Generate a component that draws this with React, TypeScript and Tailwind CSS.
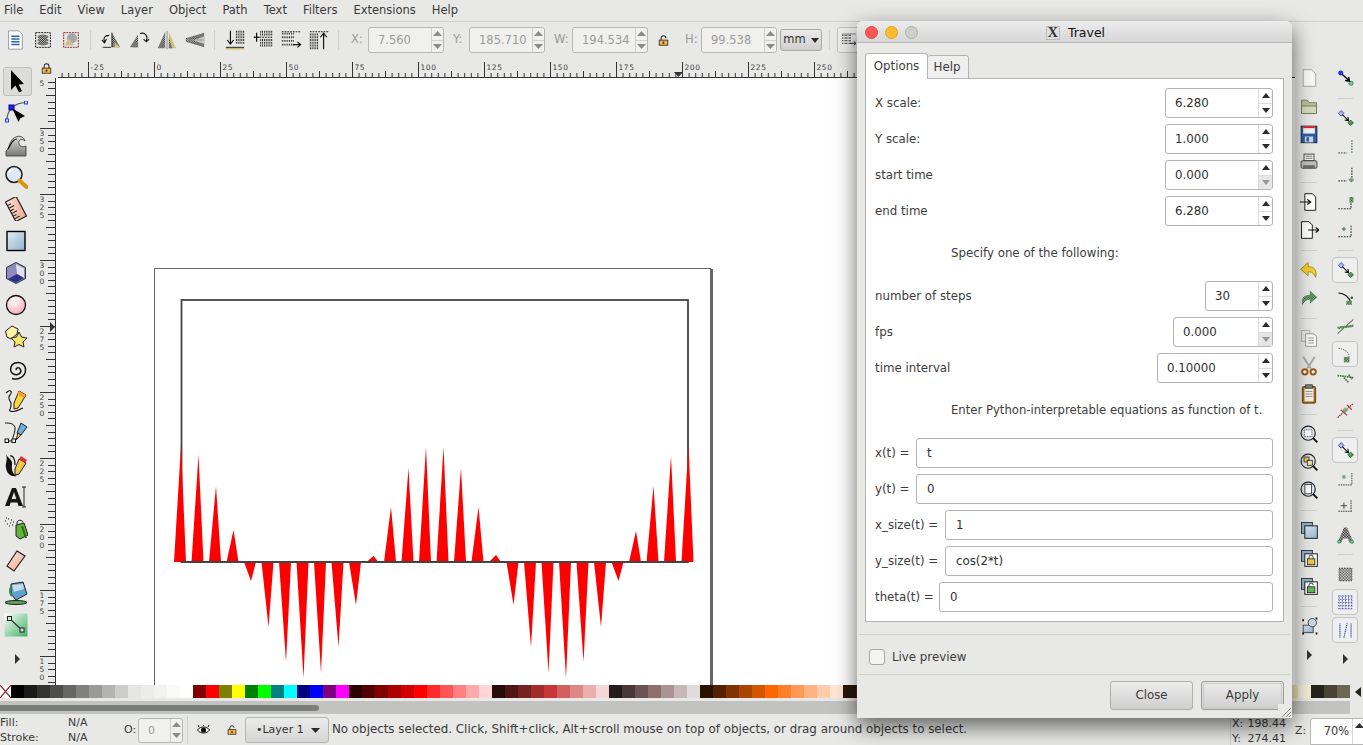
import type { ReactNode } from "react";

const FONT = "font-['DejaVu_Sans',sans-serif]";

const GRAYS = ["#000000", "#1a1a1a", "#333333", "#4d4d4d", "#666666", "#808080", "#999999", "#b3b3b3", "#cccccc", "#e6e6e6", "#ececec", "#f2f2f2", "#f9f9f9", "#ffffff"];
const BASIC = ["#800000", "#ff0000", "#808000", "#ffff00", "#008000", "#00ff00", "#008080", "#00ffff", "#000080", "#0000ff", "#800080", "#ff00ff"];
const REDS = ["#2b0000", "#550000", "#800000", "#aa0000", "#d40000", "#ff0000", "#ff2a2a", "#ff5555", "#ff8080", "#ffaaaa", "#ffd5d5", "#280b0b", "#501616", "#782121", "#a02c2c", "#c83737", "#d35f5f", "#de8787", "#e9afaf", "#f4d7d7", "#241c1c", "#483737", "#6c5353", "#916f6f", "#ac9393", "#c8b7b7", "#e3dbdb"];
const ORANGES = ["#2b1100", "#552200", "#803300", "#aa4400", "#d45500", "#ff6600", "#ff7f2a", "#ff9955", "#ffb380", "#ffccaa", "#ffe6d5", "#28170b", "#502d16", "#784421", "#a05a2c", "#c87137", "#d38d5f", "#deaa87", "#e9c6af", "#f4e3d7", "#241f1c", "#483e37", "#6c5d53", "#917c6f", "#ac9d93", "#c8beb7", "#e3dedb"];
const YELLOWS = ["#2b2200", "#554400", "#806600", "#aa8800", "#d4aa00", "#ffcc00", "#ffd42a", "#ffdd55", "#ffe680", "#ffeeaa", "#fff6d5", "#28220b", "#504416", "#786721", "#a0892c", "#c8ab37", "#d3bc5f", "#decd87", "#e9ddaf", "#f4eed7", "#24221c", "#484537", "#6c6753"];
const PALETTE = [...GRAYS, ...BASIC, ...REDS, ...ORANGES, ...YELLOWS];

const TIPS = [445, 455, 486, 530, 581, 627, 662, 678, 673, 647, 605, 556, 507, 468, 447, 447, 468, 507, 555, 605, 647, 673, 678, 662, 627, 581, 531, 486, 456, 445];

function Ic({ children, size = 24 }: { children: ReactNode; size?: number }) {
  return (
    <svg width={size} height={size} viewBox="0 0 24 24" className="shrink-0">
      {children}
    </svg>
  );
}

function Defs() {
  return (
    <svg width="0" height="0" className="h-0 w-0 shrink-0">
      <defs>
        <pattern id="dz" width="2" height="2" patternUnits="userSpaceOnUse">
          <rect width="2" height="2" fill="#ddd" />
          <rect width="1" height="1" fill="#111" />
          <rect x="1" y="1" width="1" height="1" fill="#111" />
        </pattern>
        <pattern id="dg" width="2" height="2" patternUnits="userSpaceOnUse">
          <rect width="2" height="2" fill="#9fc59f" />
          <rect width="1" height="1" fill="#1d5b1d" />
          <rect x="1" y="1" width="1" height="1" fill="#1d5b1d" />
        </pattern>
        <linearGradient id="gblue" x1="0" y1="0" x2="1" y2="1">
          <stop offset="0" stopColor="#e4edf5" />
          <stop offset="1" stopColor="#8fb2cf" />
        </linearGradient>
        <radialGradient id="gpink" cx="0.4" cy="0.3" r="0.8">
          <stop offset="0" stopColor="#ffffff" />
          <stop offset="1" stopColor="#ff9fb0" />
        </radialGradient>
        <linearGradient id="gsteel" x1="0" y1="0" x2="0" y2="1">
          <stop offset="0" stopColor="#dddddd" />
          <stop offset="1" stopColor="#777777" />
        </linearGradient>
        <linearGradient id="ggreen" x1="0" y1="0" x2="1" y2="1">
          <stop offset="0" stopColor="#ffffff" />
          <stop offset="1" stopColor="#3fae63" />
        </linearGradient>
        <linearGradient id="gsalmon" x1="0" y1="0" x2="1" y2="1">
          <stop offset="0" stopColor="#fde4da" />
          <stop offset="1" stopColor="#f0a890" />
        </linearGradient>
      </defs>
    </svg>
  );
}

const Padlock = ({ open = false, size = 14 }: { open?: boolean; size?: number }) => (
  <svg width={size} height={size} viewBox="0 0 14 14" className="shrink-0">
    <path d={open ? "M4 7V4a3 3 0 0 1 6 0" : "M4 7V4a3 3 0 0 1 6 0v3"} fill="none" stroke="#222" strokeWidth="1.3" />
    <rect x="1.5" y="6.5" width="11" height="6.5" fill="#f3b63a" stroke="#222" />
    <rect x="6" y="8.5" width="2" height="2.5" fill="#222" />
  </svg>
);

// left tool column
const TOOLS: ReactNode[] = [
  <path d="M7 1 L7 21 L11.5 16.5 L15 23.5 L18 22 L14.7 15.5 L20 15 Z" fill="#000" />,
  <>
    <path d="M3 19 C3 10 9 2 22 1.5" fill="none" stroke="#555" strokeWidth="1.2" />
    <rect x="5" y="4" width="5" height="5" fill="#2424f0" stroke="#00009a" />
    <rect x="20.5" y="0" width="3" height="3" fill="#d8d8ff" stroke="#3838e0" />
    <rect x="1.5" y="18" width="3" height="3" fill="#d8d8ff" stroke="#3838e0" />
    <path d="M8 7 L21 15 L16 17.5 L14.5 21 Z" fill="#000" />
  </>,
  <>
    <path d="M2 22 L2 18 C5 17 5 8 10 5 C14 2 20 3 21 8 C17 5 14 7 15 11 C16 14 19 14 22 13 L22 23 L2 23 Z" fill="url(#gsteel)" stroke="#333" strokeWidth="0.8" />
    <path d="M4 16 C7 12 8 6 13 6" fill="none" stroke="#111" strokeWidth="1.2" />
  </>,
  <>
    <circle cx="10" cy="9.5" r="8" fill="#dbe9f4" stroke="#222" strokeWidth="1.6" />
    <path d="M15.5 15.5 L22.5 22" stroke="#e0910f" strokeWidth="4" strokeLinecap="round" />
    <path d="M5 8 C6 5.5 8 4.5 10 4.5" fill="none" stroke="#fff" strokeWidth="1.5" />
  </>,
  <g transform="rotate(-28 12 12)">
    <rect x="6" y="1" width="12" height="22" fill="url(#gsalmon)" stroke="#222" strokeWidth="1.2" />
    <path d="M6 5h4M6 8h6M6 11h4M6 14h6M6 17h4M6 20h6" stroke="#222" />
  </g>,
  <rect x="3" y="2.5" width="18" height="19" fill="url(#gblue)" stroke="#000" strokeWidth="1.4" />,
  <>
    <path d="M12 1.5 L21.5 6.5 L21.5 17.5 L12 22.5 L2.5 17.5 L2.5 6.5 Z" fill="#8d8dc0" stroke="#333" strokeWidth="1" />
    <path d="M12 3 L20 7.5 L20 17 L13 13 Z" fill="#e2e2ef" />
    <path d="M4 18 L13 13 L20 17 L12 21.5 Z" fill="#2f2f8e" />
  </>,
  <circle cx="12" cy="12" r="9.5" fill="url(#gpink)" stroke="#111" strokeWidth="1.3" />,
  <>
    <path d="M8 1 L14 4 L13 9 L7 14 L3 12 L1.5 6 Z" fill="#fff2a8" stroke="#222" />
    <path d="M15 7 L17.5 12 L23 13 L19 17 L20 22 L15 19.5 L10 22 L11 17 L7 13 L12.5 12 Z" fill="#f4e76c" stroke="#222" />
  </>,
  <path d="M12.5 13 C11 11 15 9.5 16.5 12.5 C18 16 13.5 19 9.5 17 C5 14.5 6 8 11 6 C16.5 4 22 8 21.5 13.5 C21 20 14 23.5 8 21.5" fill="none" stroke="#111" strokeWidth="1.5" />,
  <>
    <path d="M2 4 C6 0 9 2 6 6 C3 9 6 11 7 14 C8 20 3 22 8 22.5 C13 23 16 20 19 19" fill="none" stroke="#111" strokeWidth="1.1" />
    <path d="M15 2 L22 6 L14 19 L10 20 L10 14 Z" fill="#ffd23e" stroke="#222" />
    <path d="M15 2 L22 6 L20 9 L13 5 Z" fill="#ff9c2a" />
  </>,
  <>
    <path d="M1 2 C5 2 12 2 11 9 C10 14 9 16 8 20 L3 20" fill="none" stroke="#111" strokeWidth="1" />
    <rect x="1" y="18" width="3.5" height="3.5" fill="#fff" stroke="#111" />
    <rect x="8" y="18" width="3.5" height="3.5" fill="#fff" stroke="#111" />
    <path d="M17 2 L23 6 L17 14 L13 12 Z" fill="#6ab0dc" stroke="#222" />
    <path d="M14 12 L17 14 L12 19 Z" fill="#f3c84a" stroke="#222" />
  </>,
  <>
    <path d="M2 1 C4 6 9 6 8 12 C7 18 10 22 13 23 C7 24 3 21 2 15 C1 10 4 8 2 1 Z" fill="#111" />
    <path d="M15 6 L22 10 L15 21 L11 22 L11 16 Z" fill="#f3c84a" stroke="#222" />
    <path d="M17 3 L23 7 L21 10 L15 6 Z" fill="#e03131" />
    <path d="M6 3 C9 2 11 6 11 12" fill="none" stroke="#111" strokeWidth="1.2" />
  </>,
  <>
    <path d="M1 21 L8 3 L12 3 L19 21 L14.5 21 L13.4 17.5 L6.6 17.5 L5.5 21 Z M7.7 14 L12.3 14 L10 7 Z" fill="#151515" fillRule="evenodd" />
    <path d="M20 2 L20 22 M18 2 h4 M18 22 h4" stroke="#222" />
  </>,
  <>
    <path d="M1 4h1M4 2h1M7 3h1M3 7h1M6 6h1M9 5h1M5 9h1M8 8h1M2 1h1" stroke="#111" strokeWidth="1.2" />
    <path d="M12 8 L20 6 L24 18 L16 22 L12 19 Z" fill="#62b23c" stroke="#222" />
    <path d="M13 7 a3 3 0 0 1 6 -1.5" fill="none" stroke="#222" />
    <path d="M18 9 L22 21" stroke="#2d6b1a" strokeWidth="2" />
  </>,
  <path d="M13 2 L21 7 L10 22 L3 17 Z" fill="url(#gsalmon)" stroke="#222" strokeWidth="1.2" />,
  <>
    <path d="M7 3 L19 1 L23 13 L12 19 L7 13 Z" fill="#5f9fca" stroke="#222" />
    <path d="M8 4 L19 3 L20 8 L10 11 Z" fill="#c3dbea" />
    <path d="M7 6 C5 9 6 13 8 15" fill="none" stroke="#2f8f4a" strokeWidth="2" />
    <ellipse cx="12" cy="21.5" rx="11" ry="2" fill="#5aa35a" stroke="#222" />
  </>,
  <>
    <rect x="0.5" y="0.5" width="23" height="23" fill="url(#ggreen)" />
    <path d="M6 6 L18 17" stroke="#333" strokeWidth="1.2" />
    <rect x="3.5" y="3.5" width="4" height="4" fill="#ddd" stroke="#222" />
    <rect x="16" y="15" width="4" height="4" fill="#ddd" stroke="#222" />
  </>,
];

const Chevron = () => (
  <svg width="7" height="10" viewBox="0 0 7 10">
    <path d="M1 0 L6 5 L1 10 Z" fill="#333" />
  </svg>
);

// top toolbar
const doc = (
  <>
    <path d="M5 2 H16 L20 6 V22 H5 Z" fill="#fff" stroke="#8b98a8" />
    <path d="M8 8h9M8 11h9M8 14h9M8 17h9" stroke="#2f5fb4" strokeWidth="1.6" />
  </>
);
const selAll = (
  <>
    <rect x="4" y="4" width="16" height="16" fill="none" stroke="#000" strokeDasharray="2 1" />
    <ellipse cx="12" cy="8.5" rx="6" ry="2.5" fill="url(#dz)" />
    <ellipse cx="12" cy="12" rx="6" ry="2.5" fill="url(#dz)" />
    <ellipse cx="12" cy="15.5" rx="6" ry="2.5" fill="url(#dz)" />
  </>
);
const selLayers = (
  <>
    <rect x="4" y="4" width="16" height="16" fill="none" stroke="#7c1a1a" strokeDasharray="2 1" />
    <circle cx="13" cy="10" r="5.5" fill="#a6a6a6" />
    <path d="M5 18 L9 10 L16 18 Z" fill="#cdbf92" />
  </>
);
const rotL = (
  <>
    <path d="M13 4 L13 20 L22 20 Z" fill="url(#dz)" />
    <path d="M16 15 L22 20 H16 Z" fill="#d6c37e" />
    <path d="M3 20 H12 M13 4 V20" stroke="#222" />
    <path d="M10 7 C5 7 3 10 5 14 M2 12 L5 15 L7 11" fill="none" stroke="#111" strokeWidth="1.2" />
  </>
);
const rotR = (
  <>
    <path d="M11 6 L11 20 L2 20 Z" fill="url(#dz)" />
    <path d="M11 13 L11 20 H5 Z" fill="#777" />
    <path d="M13 5 C19 3 22 8 20 13 M23 11 L20 14 L17 11" fill="none" stroke="#111" strokeWidth="1.2" />
  </>
);
const flipH = (
  <>
    <path d="M10 3 L10 21 L2 21 Z" fill="url(#dz)" />
    <path d="M14 3 L14 21 L22 21 Z" fill="#d6c37e" />
    <path d="M14 3 L14 21 L18 21 L14 9 Z" fill="url(#dz)" />
    <path d="M12 2 V22" stroke="#888" />
  </>
);
const flipV = (
  <>
    <path d="M22 4 L22 20 L2 14 L2 10 Z" fill="url(#dz)" />
    <path d="M22 8 V16 L10 12.5 Z" fill="#c9c9c9" />
    <path d="M2 12 H22" stroke="#999" />
  </>
);
const lines = (ys: number[], x1: number, x2: number) => (
  <path d={ys.map((y) => `M${x1} ${y}H${x2}`).join("")} stroke="#222" strokeWidth="2" strokeDasharray="1 1" fill="none" />
);
const alignA = (
  <>
    {lines([3, 6, 9, 12, 15], 13, 22)}
    <path d="M7 2 V16 M3.5 12 L7 16.5 L10.5 12" fill="none" stroke="#111" strokeWidth="1.3" />
    <path d="M2 20 H22" stroke="#111" />
    <path d="M2 21.5 H22" stroke="#cdb96f" strokeWidth="1.6" />
  </>
);
const alignB = (
  <>
    {lines([3, 6, 12, 15, 18], 9, 22)}
    <path d="M2 9 H22" stroke="#111" strokeWidth="1.3" strokeDasharray="2 1" />
    <path d="M5 4 V14 M2 9 H8" stroke="#111" strokeWidth="1.3" />
  </>
);
const alignC = (
  <>
    {lines([5, 9, 13, 17], 2, 16)}
    <path d="M2 3 H22" stroke="#111" strokeDasharray="2 1" />
    <path d="M14 17 H22 M19 14 L22.5 17 L19 20" fill="none" stroke="#111" strokeWidth="1.3" />
  </>
);
const alignD = (
  <>
    {lines([6, 9, 12, 15, 18, 21], 2, 11)}
    <path d="M2 3 H22" stroke="#111" strokeDasharray="2 1" />
    <path d="M17 22 V5 M13.5 9 L17 4.5 L20.5 9" fill="none" stroke="#111" strokeWidth="1.3" />
  </>
);

// right column A, null = separator
const COL_A: (ReactNode | null)[] = [
  <path d="M5 2 H15 L20 7 V22 H5 Z" fill="#fafafa" stroke="#9a9a9a" />,
  <>
    <path d="M3 5 H10 L12 8 H21 V21 H3 Z" fill="#b9c19c" stroke="#6f7557" />
    <path d="M3 12 H21 V21 H3 Z" fill="#d5dbb9" stroke="#6f7557" />
  </>,
  <>
    <rect x="2.5" y="2.5" width="19" height="20" fill="#2e5ea8" stroke="#123" />
    <rect x="5" y="2.5" width="14" height="9" fill="#f4f4f4" />
    <rect x="5" y="2.5" width="14" height="2.5" fill="#d8232a" />
    <rect x="7" y="15" width="10" height="7" fill="#cfd6df" />
    <rect x="9" y="16" width="3" height="5" fill="#2e5ea8" />
  </>,
  <>
    <rect x="6" y="2.5" width="12" height="8" fill="#f4f4f4" stroke="#333" />
    <path d="M8 5h8M8 7.5h8" stroke="#666" />
    <rect x="2.5" y="10.5" width="19" height="9" rx="1.5" fill="#bfbfbf" stroke="#333" />
    <rect x="5" y="16" width="14" height="3" fill="#666" />
  </>,
  null,
  <>
    <path d="M7 2 H16 L20 6 V22 H7 Z" fill="#fff" stroke="#111" strokeWidth="1.1" />
    <path d="M1 12 H13 M10 9 L14 12 L10 15" fill="none" stroke="#111" strokeWidth="1.4" />
  </>,
  <>
    <path d="M3 2 H12 L16 6 V22 H3 Z" fill="#fff" stroke="#111" strokeWidth="1.1" />
    <path d="M11 12 H23 M20 9 L24 12 L20 15" fill="none" stroke="#111" strokeWidth="1.4" />
  </>,
  null,
  <path d="M2 11 L11 3 V8 C18 8 22 12 20 21 C18 16 15 14 11 14 V19 Z" fill="#f2cc30" stroke="#a08510" />,
  <path d="M22 11 L13 3 V8 C6 8 2 12 4 21 C6 16 9 14 13 14 V19 Z" fill="url(#dg)" />,
  null,
  <>
    <path d="M3 3 H13 L13 16 H3 Z" fill="#e8e8e8" stroke="#aaa" />
    <path d="M8 7 H18 L21 10 V22 H8 Z" fill="#fbfbfb" stroke="#888" />
    <path d="M11 12h7M11 15h7M11 18h7" stroke="#888" />
  </>,
  <>
    <path d="M5 1 L14 15 M19 1 L10 15" stroke="#aaa" strokeWidth="2.4" />
    <circle cx="7" cy="19" r="3.2" fill="#fff" stroke="#9c5a14" strokeWidth="2.4" />
    <circle cx="17" cy="19" r="3.2" fill="#fff" stroke="#9c5a14" strokeWidth="2.4" />
  </>,
  <>
    <rect x="4" y="3" width="16" height="20" rx="1.5" fill="#a8641c" stroke="#5f3508" />
    <rect x="6.5" y="5" width="11" height="16" fill="#f4f1e6" />
    <rect x="8" y="1" width="8" height="4" fill="#888" stroke="#333" />
    <path d="M8 9h8M8 12h8M8 15h8" stroke="#888" />
  </>,
  null,
  <>
    <circle cx="11" cy="11" r="8.5" fill="#dfe7ee" stroke="#222" strokeWidth="1.4" />
    <rect x="6.5" y="7" width="9" height="8" fill="#fff" stroke="#333" strokeDasharray="1 1" />
    <path d="M17 17 L22 22" stroke="#111" strokeWidth="2.4" />
  </>,
  <>
    <circle cx="11" cy="11" r="8.5" fill="#dfe7ee" stroke="#222" strokeWidth="1.4" />
    <rect x="6" y="6" width="6" height="6" fill="#e8c14c" stroke="#333" />
    <rect x="10" y="10" width="6" height="6" fill="#f4e3a0" stroke="#333" />
    <path d="M17 17 L22 22" stroke="#111" strokeWidth="2.4" />
  </>,
  <>
    <circle cx="11" cy="11" r="8.5" fill="#dfe7ee" stroke="#222" strokeWidth="1.4" />
    <rect x="7" y="5.5" width="8" height="11" fill="#fff" stroke="#333" />
    <path d="M17 17 L22 22" stroke="#111" strokeWidth="2.4" />
  </>,
  null,
  <>
    <rect x="3" y="3" width="13" height="13" fill="#8fb3cf" stroke="#222" />
    <rect x="7" y="7" width="15" height="15" fill="url(#gblue)" stroke="#222" strokeWidth="1.2" />
  </>,
  <>
    <rect x="3" y="3" width="13" height="13" fill="#8fb3cf" stroke="#222" />
    <rect x="7" y="7" width="15" height="15" fill="#fff" stroke="#222" strokeWidth="1.2" />
    <rect x="10" y="13" width="9" height="7" fill="#f3c84a" stroke="#222" />
    <path d="M12 13 V11 a2.5 2.5 0 0 1 5 0 V13" fill="none" stroke="#222" />
  </>,
  <>
    <rect x="3" y="3" width="13" height="13" fill="#8fb3cf" stroke="#222" />
    <rect x="7" y="7" width="15" height="15" fill="#fff" stroke="#222" strokeWidth="1.2" />
    <rect x="10" y="13" width="9" height="7" fill="#66b85a" stroke="#222" />
    <path d="M12 13 V11 a2.5 2.5 0 0 1 5 0" fill="none" stroke="#222" />
  </>,
  null,
  <>
    <path d="M4 5h2M20 3h2M4 21h2M20 21h2" stroke="#000" strokeWidth="2.4" />
    <rect x="5" y="11" width="12" height="9" fill="url(#gblue)" stroke="#333" />
    <circle cx="16" cy="8" r="5" fill="#c9d9e6" stroke="#333" />
  </>,
];

const snapNode = (
  <>
    <rect x="4" y="3" width="5" height="5" transform="rotate(45 6.5 5.5)" fill="#b6b6e8" stroke="#3838c0" />
    <rect x="16" y="15" width="5" height="5" transform="rotate(45 18.5 17.5)" fill="url(#dg)" stroke="#2a6b2a" />
    <path d="M8 7 L16 15 M11 14 L16 15 L15 10" fill="none" stroke="#111" strokeWidth="1.3" />
  </>
);

// right column B, {on} marks a pressed button
const COL_B: ({ icon: ReactNode; on?: boolean } | null)[] = [
  {
    icon: (
      <>
        <circle cx="6" cy="5" r="2.6" fill="#3b3bff" stroke="#00009a" />
        <circle cx="19" cy="18" r="2.6" fill="#7fd19a" stroke="#1e7a3e" />
        <path d="M8 7 L17 15 M11.5 14.5 L17 15.5 L16 10" fill="none" stroke="#000" strokeWidth="1.7" />
      </>
    ),
  },
  null,
  { icon: snapNode },
  { icon: <path d="M3 20 H14 M20 20 V4" fill="none" stroke="#6d8f6d" strokeWidth="2" strokeDasharray="2 1.5" /> },
  {
    icon: (
      <>
        <path d="M3 20 H14 M20 16 V3" fill="none" stroke="#444" strokeWidth="1.6" strokeDasharray="2 1.5" />
        <rect x="17" y="16" width="5" height="5" transform="rotate(45 19.5 18.5)" fill="url(#dg)" />
      </>
    ),
  },
  {
    icon: (
      <>
        <path d="M3 20 H19 V12" fill="none" stroke="#222" strokeWidth="1.3" strokeDasharray="2 1.5" />
        <rect x="17" y="5" width="5" height="7" fill="url(#dg)" />
      </>
    ),
  },
  {
    icon: (
      <>
        <path d="M3 20 H19 V5" fill="none" stroke="#222" strokeWidth="1.3" strokeDasharray="2 1.5" />
        <rect x="8" y="8" width="4" height="4" transform="rotate(45 10 10)" fill="url(#dg)" />
      </>
    ),
  },
  null,
  { icon: snapNode, on: true },
  {
    icon: (
      <>
        <path d="M3 5 C10 5 17 10 19 18" fill="none" stroke="#111" strokeWidth="1.3" />
        <rect x="13" y="15" width="7" height="5" fill="url(#dg)" />
        <circle cx="20" cy="11" r="1.5" fill="#1d5b1d" />
      </>
    ),
  },
  {
    icon: (
      <>
        <path d="M2 21 L22 3" stroke="#333" strokeWidth="1.2" />
        <path d="M2 14 C8 12 14 13 22 11" stroke="url(#dg)" strokeWidth="3" fill="none" />
      </>
    ),
  },
  {
    icon: (
      <>
        <path d="M3 4 C10 5 18 9 16 16" fill="none" stroke="#555" strokeDasharray="2 1" />
        <rect x="10" y="15" width="7" height="7" fill="url(#dg)" />
      </>
    ),
    on: true,
  },
  { icon: <path d="M2 3 C6 4 12 4 22 6 M10 6 L16 12 M16 2 L20 8" stroke="#3a6b3a" strokeWidth="2" fill="none" strokeDasharray="2 1" /> },
  {
    icon: (
      <>
        <path d="M2 21 L22 3" stroke="#8a2c2c" strokeWidth="1.5" strokeDasharray="2 1" />
        <path d="M6 11 L14 18 M14 5 L20 11" stroke="#c23a3a" strokeWidth="1.5" />
        <rect x="9" y="9" width="5" height="5" transform="rotate(45 11.5 11.5)" fill="url(#dg)" />
      </>
    ),
  },
  null,
  { icon: snapNode, on: true },
  {
    icon: (
      <>
        <path d="M3 20 H20 V5" fill="none" stroke="#666" strokeDasharray="2 1" strokeWidth="1.4" />
        <rect x="8" y="8" width="4" height="4" fill="#6e9f6e" />
      </>
    ),
  },
  {
    icon: (
      <>
        <path d="M3 18 H20 M19 4 V17" fill="none" stroke="#444" strokeDasharray="2 1" strokeWidth="1.3" />
        <path d="M6 11 H14 M10 7 V15" stroke="#222" />
      </>
    ),
  },
  {
    icon: (
      <>
        <path d="M2 22 L10 3 H14 L22 22 H17 L15 17 H9 L7 22 Z" fill="url(#dz)" />
        <circle cx="4" cy="21" r="2" fill="#7fd19a" stroke="#1e7a3e" />
        <circle cx="20" cy="21" r="2" fill="#7fd19a" stroke="#1e7a3e" />
      </>
    ),
  },
  null,
  {
    icon: (
      <>
        <rect x="4" y="4" width="16" height="16" fill="url(#dz)" opacity="0.7" />
        <rect x="4" y="4" width="16" height="16" fill="none" stroke="#111" strokeDasharray="1 1" />
      </>
    ),
  },
  {
    icon: <path d="M3 4 H21 M3 8 H21 M3 12 H21 M3 16 H21 M3 20 H21 M4 3 V21 M8 3 V21 M12 3 V21 M16 3 V21 M20 3 V21" stroke="#1c1cb0" strokeWidth="1" strokeDasharray="1 1" fill="none" />,
    on: true,
  },
  {
    icon: <path d="M5 3 V21 M19 3 V21 M10 21 L14 3" stroke="#1c1c9c" strokeWidth="1.3" strokeDasharray="1.5 1" fill="none" />,
    on: true,
  },
];

function Tri({ up, color = "#2b2b2b", w = 9 }: { up?: boolean; color?: string; w?: number }) {
  return (
    <svg width={w} height="5" viewBox="0 0 9 5" preserveAspectRatio="none" className="shrink-0">
      <path d={up ? "M0 5 L4.5 0 L9 5 Z" : "M0 0 L9 0 L4.5 5 Z"} fill={color} />
    </svg>
  );
}

function ToolSpin({ value }: { value: string }) {
  return (
    <div className="flex h-[26px] w-[76px] shrink-0 rounded-[3px] border border-[#b6b6b6] bg-[#f0f0ef]">
      <div className="flex-1 pl-[9px] text-[11.5px] leading-[24px] text-[#9b9b9b]">{value}</div>
      <div className="flex w-[12px] flex-col border-l border-[#d0d0d0]">
        <div className="flex flex-1 items-center justify-center border-b border-[#d0d0d0]">
          <Tri up color="#8b8b8b" />
        </div>
        <div className="flex flex-1 items-center justify-center">
          <Tri color="#8b8b8b" />
        </div>
      </div>
    </div>
  );
}

function DialogSpin({ value, width, lowOff }: { value: string; width: string; lowOff?: boolean }) {
  return (
    <div className={`flex h-[30px] shrink-0 rounded-[3px] border border-[#b4b4b4] bg-white ${width}`}>
      <div className="flex-1 pl-[9px] leading-[28px] text-[#2e2e2e]">{value}</div>
      <div className="flex w-[14px] flex-col border-l border-[#dcdcdc]">
        <div className="flex flex-1 items-center justify-center border-b border-[#dcdcdc]">
          <Tri up w={8} />
        </div>
        <div className={`flex flex-1 items-center justify-center ${lowOff ? "bg-[#e6e6e6]" : ""}`}>
          <Tri w={8} color={lowOff ? "#979797" : "#2b2b2b"} />
        </div>
      </div>
    </div>
  );
}

function SpinRow({ label, value, width, lowOff }: { label: string; value: string; width: string; lowOff?: boolean }) {
  return (
    <div className="flex h-[36px] items-center justify-between">
      <span className="pt-[1px]">{label}</span>
      <DialogSpin value={value} width={width} lowOff={lowOff} />
    </div>
  );
}

function TextRow({ label, value, inputLeft }: { label: string; value: string; inputLeft: string }) {
  return (
    <div className="flex h-[36px] items-center">
      <span className={`shrink-0 whitespace-pre pt-[1px] ${inputLeft}`}>{label}</span>
      <div className="h-[30px] flex-1 rounded-[3px] border border-[#b4b4b4] bg-white pl-[10px] leading-[28px] text-[#2e2e2e]">
        {value}
      </div>
    </div>
  );
}

function TravelDialog() {
  return (
    <div className="absolute left-[857px] top-[21px] flex h-[697px] w-[435px] flex-col rounded-t-[6px] bg-[#e8e8e7] text-[11.8px] text-[#3c3c3c] shadow-[0_8px_22px_rgba(0,0,0,0.6)]">
      <div className="relative flex h-[22px] shrink-0 items-center justify-center rounded-t-[6px] border-b border-[#b5b5b5] bg-gradient-to-b from-[#ececec] to-[#d6d6d6] pt-[3px]">
        <div className="absolute left-[8px] top-[5px] flex gap-[7px]">
          <div className="size-[13px] rounded-full border border-[#e2463f] bg-[#fc5753]" />
          <div className="size-[13px] rounded-full border border-[#dfa023] bg-[#fdbc2e]" />
          <div className="size-[13px] rounded-full border border-[#9fb59f] bg-[#cfcfcf]" />
        </div>
        <span className="ml-[2px] mr-[5px] flex h-[14px] w-[14px] items-center justify-center border border-[#bbbbbb] bg-[#dddddd] font-['Liberation_Serif',serif] text-[14px] font-bold leading-none text-[#333]">
          X
        </span>
        <span className="ml-[3px] text-[12.5px] text-[#111]">Travel</span>
      </div>

      <div className="flex flex-1 flex-col px-[8px] pt-[10px]">
        <div className="flex h-[25px] items-end">
          <div className="z-10 -mb-px flex h-[26px] w-[63px] items-center justify-center rounded-t-[3px] border border-b-0 border-[#b4b4b4] bg-white pt-[1px]">
            Options
          </div>
          <div className="flex h-[23px] w-[41px] items-center justify-center rounded-t-[3px] border border-b-0 border-l-0 border-[#b4b4b4] bg-[#efefef] pr-[2px] pt-[2px]">
            Help
          </div>
        </div>

        <div className="h-[544px] border border-[#b4b4b4] bg-white pl-[9px] pr-[10px] pt-[6px]">
          <SpinRow label="X scale:" value="6.280" width="w-[108px]" />
          <SpinRow label="Y scale:" value="1.000" width="w-[108px]" />
          <SpinRow label="start time" value="0.000" width="w-[108px]" lowOff />
          <SpinRow label="end time" value="6.280" width="w-[108px]" />
          <div className="flex h-[49px] items-center pl-[76px] pt-[1px]">Specify one of the following:</div>
          <SpinRow label="number of steps" value="30" width="w-[68px]" />
          <SpinRow label="fps" value="0.000" width="w-[100px]" lowOff />
          <SpinRow label="time interval" value="0.10000" width="w-[116px]" />
          <div className="flex h-[49px] items-center pl-[76px] pt-[1px] text-[11.65px]">Enter Python-interpretable equations as function of t.</div>
          <TextRow label="x(t) =" value="t" inputLeft="w-[41px]" />
          <TextRow label="y(t) =" value="0" inputLeft="w-[41px]" />
          <TextRow label="x_size(t) =" value="1" inputLeft="w-[70px]" />
          <TextRow label="y_size(t) =" value="cos(2*t)" inputLeft="w-[70px]" />
          <TextRow label="theta(t) =" value="0" inputLeft="w-[64px]" />
        </div>

        <div className="-mx-[6px] mt-[12px] h-px bg-[#d2d2d2]" />
        <div className="flex h-[39px] items-center gap-[7px] pl-[4px] pt-[5px]">
          <div className="size-[16px] rounded-[3px] border border-[#a8a8a8] bg-[#f4f4f4]" />
          <span className="pt-[1px]">Live preview</span>
        </div>
        <div className="-mx-[6px] h-px bg-[#d2d2d2]" />
        <div className="flex justify-end gap-[8px] pt-[6px]">
          <div className="flex h-[29px] w-[83px] items-center justify-center rounded-[3px] border border-[#b0b0b0] bg-gradient-to-b from-[#ececec] to-[#cfcfcf] pt-[1px]">
            Close
          </div>
          <div className="flex h-[29px] w-[83px] items-center justify-center rounded-[3px] border border-[#9c9c9c] bg-gradient-to-b from-[#ececec] to-[#cfcfcf] pt-[1px] outline outline-1 -outline-offset-[3px] outline-[#c9c9c9]">
            Apply
          </div>
        </div>
      </div>

      <svg width="14" height="14" viewBox="0 0 14 14" className="absolute bottom-0 right-0 bg-[#e8e8e7]">
        <path d="M13 4 L4 13 M13 8 L8 13 M13 11 L11 13" stroke="#8c8c8c" fill="none" />
      </svg>
    </div>
  );
}

const topMajors = Array.from({ length: 12 }, (_, i) => ({ x: 88.5 + 66 * i, label: (i - 1) * 25 }));
const leftMajors = Array.from({ length: 10 }, (_, i) => 62 + 66 * i);
const leftLabels = ["375", "350", "325", "300", "275", "250", "225", "200", "175", "150"];

function TopRuler() {
  return (
    <svg width="1239" height="20" viewBox="56 58 1239 20" className="block shrink-0">
      {Array.from({ length: 4 }, (_, k) => (
        <path key={k} d={`M${88.5 - 6.6 * (k + 1)} 73V77`} stroke="#333" />
      ))}
      {topMajors.map(({ x, label }) => (
        <g key={x}>
          <path d={`M${x} 62V77`} stroke="#333" />
          <text x={x + 2} y="70" fontSize="7.5" fill="#444" letterSpacing="0.6" fontFamily="DejaVu Sans">
            {String(label)}
          </text>
          {Array.from({ length: 9 }, (_, k) => (
            <path key={k} d={`M${x + 6.6 * (k + 1)} ${k === 4 ? 71 : 73}V77`} stroke="#333" />
          ))}
        </g>
      ))}
      <path d="M58 77.5H1295" stroke="#333" />
      <path d="M674 72H683L678.5 77Z" fill="#333" />
    </svg>
  );
}

function LeftRuler() {
  return (
    <svg width="20" height="607" viewBox="36 78 20 607" className="block shrink-0">
      {leftMajors.map((y, i) => (
        <g key={y}>
          <path d={`M40 ${y + 0.5}H55`} stroke="#333" />
          {leftLabels[i].split("").map((c, k) =>
            y + 8 + k * 8 > 84 ? (
              <text key={k} x="39.5" y={y + 8 + k * 8} fontSize="7.5" fill="#444" fontFamily="DejaVu Sans">
                {c}
              </text>
            ) : null,
          )}
          {Array.from({ length: 9 }, (_, k) => (
            <path key={k} d={`M${k === 4 ? 46 : 48} ${Math.round(y + 6.6 * (k + 1)) + 0.5}H55`} stroke="#333" />
          ))}
        </g>
      ))}
      <path d="M55.5 78V685" stroke="#333" />
      <path d="M50 322L55 327L50 332Z" fill="#333" />
    </svg>
  );
}

function Drawing() {
  return (
    <svg width="1239" height="607" viewBox="56 78 1239 607" className="block">
      <rect x="154.5" y="268.5" width="556" height="430" fill="#fff" stroke="#666" />
      <path d="M711.5 269V690" stroke="#666" strokeWidth="3" />
      <rect x="181.5" y="300" width="506.5" height="262" fill="none" stroke="#444" strokeWidth="1.8" />
      {TIPS.map((tip, i) => {
        const x = 181 + i * 17.5;
        return <path key={i} d={`M${x - 7} 562 L${x} ${tip} L${x + 5} 562 Z`} fill="#ff0000" />;
      })}
      <path d="M181 562H688" stroke="#444" strokeWidth="1.8" />
    </svg>
  );
}

function Separator() {
  return <div className="mx-auto my-[5.5px] h-px w-[16px] shrink-0 bg-[#cfcfcf]" />;
}

export default function App() {
  return (
    <div className={`relative flex h-[745px] w-[1363px] flex-col overflow-hidden bg-[#e8e8e7] text-[#3a3a3a] ${FONT}`}>
      <Defs />

      {/* menu bar */}
      <div className="flex h-[22px] shrink-0 items-center gap-[16px] border-b border-[#d0d0cf] pl-[4px] pt-[1px] text-[11.5px]">
        {["File", "Edit", "View", "Layer", "Object", "Path", "Text", "Filters", "Extensions", "Help"].map((m) => (
          <span key={m}>{m}</span>
        ))}
      </div>

      {/* commands and selection bar */}
      <div className="flex h-[36px] shrink-0 items-center pl-px text-[11.5px] text-[#9b9b9b]">
        {[doc, selAll, selLayers].map((icon, i) => (
          <div key={i} className="flex w-[28px] justify-center"><Ic size={22}>{icon}</Ic></div>
        ))}
        <div className="ml-[5px] mr-[6px] h-[20px] w-px bg-[#cfcfcf]" />
        {[rotL, rotR, flipH, flipV].map((icon, i) => (
          <div key={i} className="flex w-[28px] justify-center"><Ic size={22}>{icon}</Ic></div>
        ))}
        <div className="ml-[5px] mr-[6px] h-[20px] w-px bg-[#cfcfcf]" />
        {[alignA, alignB, alignC, alignD].map((icon, i) => (
          <div key={i} className="flex w-[28px] justify-center"><Ic size={22}>{icon}</Ic></div>
        ))}
        <div className="ml-[5px] mr-[6px] h-[20px] w-px bg-[#cfcfcf]" />
        <span className="w-[23px] pl-[6px]">X:</span>
        <ToolSpin value="7.560" />
        <span className="w-[25px] pl-[9px]">Y:</span>
        <ToolSpin value="185.710" />
        <span className="w-[27px] pl-[9px]">W:</span>
        <ToolSpin value="194.534" />
        <div className="flex w-[30px] justify-center"><Padlock open size={11} /></div>
        <span className="w-[23px] pl-[7px]">H:</span>
        <ToolSpin value="99.538" />
        <div className="ml-[3px] flex h-[22px] w-[42px] shrink-0 items-center justify-center gap-[5px] rounded-[3px] border border-[#a8a8a8] bg-gradient-to-b from-[#ebebeb] to-[#cfcfcf] text-[#333]">
          mm
          <Tri w={8} />
        </div>
        <div className="mx-[7px] h-[20px] w-px bg-[#cfcfcf]" />
        <div className="flex h-[26px] w-[34px] shrink-0 items-center rounded-[3px] border border-[#c4c4c4] bg-[#efefef] pl-[3px]">
          <Ic size={16}>{alignC}</Ic>
        </div>
      </div>

      {/* workspace */}
      <div className="flex h-[627px] shrink-0">
        <div className="flex w-[36px] shrink-0 flex-col items-start pl-[3px] pt-[7px]">
          {TOOLS.map((icon, i) => (
            <div key={i} className="flex h-[32px] w-[29px] shrink-0 items-center justify-center">
              {i === 0 ? (
                <div className="flex h-[29px] w-[29px] items-center justify-center rounded-[3px] border border-[#c0c0c0] bg-[#dcdcdb] pr-[3px]">
                  <Ic>{icon}</Ic>
                </div>
              ) : (
                <div className="pr-[3px]">
                  <Ic>{icon}</Ic>
                </div>
              )}
            </div>
          ))}
          <div className="ml-[11px] mt-[13px]"><Chevron /></div>
        </div>

        <div className="flex w-[1259px] shrink-0 flex-col">
          <div className="flex h-[20px] shrink-0">
            <div className="flex w-[20px] shrink-0 items-start justify-center pl-[1px] pt-[5px]"><Padlock size={11} /></div>
            <TopRuler />
          </div>
          <div className="flex min-h-0 flex-1">
            <LeftRuler />
            <div className="flex-1 bg-white"><Drawing /></div>
          </div>
        </div>

        <div className="flex flex-1 pt-[6px]">
          <div className="flex w-[28px] shrink-0 flex-col items-center">
            {COL_A.map((icon, i) =>
              icon === null ? (
                <Separator key={i} />
              ) : (
                <div key={i} className="flex h-[28px] shrink-0 items-center justify-center"><Ic size={20}>{icon}</Ic></div>
              ),
            )}
            <div className="mt-[10px]"><Chevron /></div>
          </div>
          <div className="flex flex-1 flex-col items-center pl-[4px]">
            {COL_B.map((item, i) =>
              item === null ? (
                <Separator key={i} />
              ) : (
                <div key={i} className="flex h-[28px] w-[26px] shrink-0 items-center justify-center">
                  {item.on ? (
                    <div className="flex size-[26px] shrink-0 items-center justify-center rounded-[4px] border border-[#c4c4c4] bg-[#efefef]">
                      <Ic size={19}>{item.icon}</Ic>
                    </div>
                  ) : (
                    <Ic size={19}>{item.icon}</Ic>
                  )}
                </div>
              ),
            )}
            <div className="mt-[10px]"><Chevron /></div>
          </div>
        </div>
      </div>

      {/* palette */}
      <div className="flex h-[16px] shrink-0 items-start">
        <svg width="11" height="13" viewBox="0 0 11 13" className="shrink-0 bg-white">
          <path d="M0 0 L11 13 M11 0 L0 13" stroke="#8a2a2a" strokeWidth="1.2" />
        </svg>
        {PALETTE.map((c, i) => (
          <div key={i} className="h-[13px] w-[13px] shrink-0" style={{ backgroundColor: c }} />
        ))}
        <div className="flex h-[13px] flex-1 items-center justify-end pr-[2px]">
          <svg width="6" height="10" viewBox="0 0 6 10"><path d="M6 0 L0 5 L6 10 Z" fill="#222" /></svg>
        </div>
      </div>

      {/* horizontal scrollbar */}
      <div className="h-[13px] w-[1350px] shrink-0 bg-[#c2c3c1] pt-[4px]">
        <div className="h-[6px] w-[319px] rounded-r-full bg-[#7b7e7d]" />
      </div>

      {/* status bar */}
      <div className="relative flex h-[31px] shrink-0 items-center pt-[1px] text-[11px]">
        <div className="w-[68px] shrink-0 leading-[15px]">
          <div>Fill:</div>
          <div>Stroke:</div>
        </div>
        <div className="w-[56px] shrink-0 leading-[15px]">
          <div>N/A</div>
          <div>N/A</div>
        </div>
        <span className="w-[14px] shrink-0">O:</span>
        <div className="flex h-[25px] w-[45px] shrink-0 rounded-[3px] border border-[#b6b6b6] bg-[#f0f0ef] text-[#9b9b9b]">
          <div className="flex-1 pl-[9px] leading-[23px]">0</div>
          <div className="flex w-[12px] flex-col border-l border-[#d0d0d0]">
            <div className="flex flex-1 items-center justify-center"><Tri up color="#8b8b8b" /></div>
            <div className="flex flex-1 items-center justify-center"><Tri color="#8b8b8b" /></div>
          </div>
        </div>
        <div className="ml-[4px] h-[28px] w-px bg-[#cfcfcf]" />
        <div className="flex w-[30px] justify-center pl-[1px]">
          <svg width="13" height="10" viewBox="0 0 13 10">
            <path d="M0.5 5 C3 1 10 1 12.5 5 C10 9 3 9 0.5 5 Z" fill="#fff" stroke="#111" />
            <circle cx="6.5" cy="5" r="2.6" fill="#111" />
            <path d="M2 2 L1 0 M6.5 1 V0 M11 2 L12 0" stroke="#111" />
          </svg>
        </div>
        <div className="flex w-[27px] justify-center"><Padlock open size={10} /></div>
        <div className="flex h-[26px] w-[84px] shrink-0 items-center justify-between rounded-[3px] border border-[#b4b4b4] bg-gradient-to-b from-[#ebebeb] to-[#d6d6d6] pl-[10px] pr-[8px] text-[#333]">
          •Layer 1
          <Tri />
        </div>
        <span className="ml-[3px] whitespace-nowrap text-[11.85px]">
          No objects selected. Click, Shift+click, Alt+scroll mouse on top of objects, or drag around objects to select.
        </span>
        <div className="absolute left-[1230px] top-0 flex h-full">
          <div className="w-px bg-[#cfcfcf]" />
          <div className="ml-[1px] w-[54px] pt-[2px] leading-[15px]">
            <div className="flex justify-between"><span>X:</span><span>198.44</span></div>
            <div className="flex justify-between"><span>Y:</span><span>274.41</span></div>
          </div>
          <span className="ml-[9px] pt-[9px]">Z:</span>
          <div className="ml-[4px] mt-[4px] flex w-[56px] rounded-t-[3px] border border-[#b6b6b6] bg-white">
            <div className="flex-1 pr-[3px] pt-[4px] text-right text-[11.5px]">70%</div>
            <div className="flex w-[13px] items-start justify-center border-l border-[#d6d6d6] pt-[4px]"><Tri up /></div>
          </div>
        </div>
      </div>

      <TravelDialog />
    </div>
  );
}
